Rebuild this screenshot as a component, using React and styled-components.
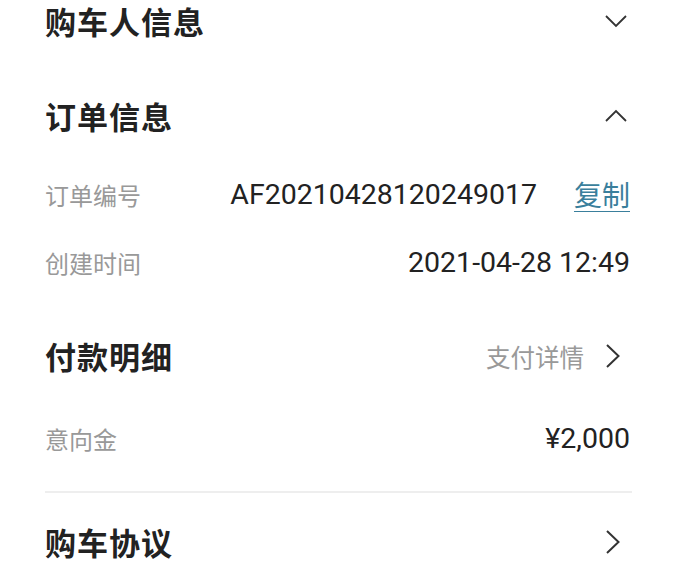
import React from "react";
import styled, { createGlobalStyle } from "styled-components";

const GlobalStyle = createGlobalStyle`
  html, body {
    margin: 0;
    padding: 0;
    background: #fff;
  }
  body {
    font-family: Roboto, "Noto Sans CJK SC", "Noto Sans", sans-serif;
    color: #222;
    overflow: hidden;
  }
`;

const Page = styled.div`
  width: 673px;
  height: 587px;
  overflow: hidden;
  background: #fff;
  padding: 0 43px 0 45px;
  box-sizing: border-box;
`;

const Section = styled.section`
  margin-top: ${(p) => p.$top ?? 24}px;
`;

const Header = styled.div`
  height: ${(p) => p.$h ?? 72}px;
  display: flex;
  align-items: center;
  justify-content: space-between;
`;

const Title = styled.h2`
  margin: 0;
  font-family: "Noto Sans CJK SC", sans-serif;
  font-size: 31px;
  line-height: 40px;
  font-weight: 700;
  color: #222;
  letter-spacing: 1px;
`;

const HeaderAction = styled.div`
  display: flex;
  align-items: center;
  gap: 22px;
  padding-right: ${(p) => p.$pr ?? 3}px;
  font-family: "Noto Sans CJK SC", sans-serif;
  font-size: 24.5px;
  color: #999;
`;

const List = styled.div`
  padding-top: ${(p) => p.$pad || 8}px;
`;

const Row = styled.div`
  height: 68px;
  display: flex;
  align-items: center;
  justify-content: space-between;
`;

const Label = styled.span`
  font-family: "Noto Sans CJK SC", sans-serif;
  font-size: 24px;
  color: #999;
`;

const Value = styled.span`
  display: flex;
  align-items: center;
  gap: 37px;
  font-family: Roboto, sans-serif;
  font-size: 28.5px;
  color: #222;
`;

const Copy = styled.a`
  font-family: "Noto Sans CJK SC", sans-serif;
  font-size: 28px;
  color: #3a7f9c;
  text-decoration: underline;
  text-underline-offset: 5px;
  text-decoration-thickness: 1px;
`;

const Divider = styled.hr`
  border: none;
  border-top: 2px solid #eeeeee;
  margin: 19px -2px 13px 0;
`;

const Chevron = ({ dir }) => {
  if (dir === "right") {
    return (
      <svg width="14" height="24" viewBox="0 0 14 24">
        <path d="M1 1 L12.5 12 L1 23" fill="none" stroke="#333" strokeWidth="2" />
      </svg>
    );
  }
  const d = dir === "up" ? "M1 12 L11 2 L21 12" : "M1 2 L11 12 L21 2";
  return (
    <svg width="22" height="14" viewBox="0 0 22 14">
      <path d={d} fill="none" stroke="#333" strokeWidth="1.8" />
    </svg>
  );
};

const App = () => {
  return (
    <>
      <GlobalStyle />
      <Page>
        <Section $top={0}>
          <Header $h={42}>
            <Title>购车人信息</Title>
            <HeaderAction>
              <Chevron dir="down" />
            </HeaderAction>
          </Header>
        </Section>

        <Section $top={38}>
          <Header>
            <Title>订单信息</Title>
            <HeaderAction>
              <Chevron dir="up" />
            </HeaderAction>
          </Header>
          <List $pad={8}>
            <Row>
              <Label>订单编号</Label>
              <Value>
                AF20210428120249017
                <Copy>复制</Copy>
              </Value>
            </Row>
            <Row>
              <Label>创建时间</Label>
              <Value>2021-04-28 12:49</Value>
            </Row>
          </List>
        </Section>

        <Section>
          <Header>
            <Title>付款明细</Title>
            <HeaderAction $pr={10}>
              支付详情
              <Chevron dir="right" />
            </HeaderAction>
          </Header>
          <List $pad={12}>
            <Row>
              <Label>意向金</Label>
              <Value>¥2,000</Value>
            </Row>
          </List>
          <Divider />
        </Section>

        <Section $top={0}>
          <Header>
            <Title>购车协议</Title>
            <HeaderAction $pr={10}>
              <Chevron dir="right" />
            </HeaderAction>
          </Header>
        </Section>
      </Page>
    </>
  );
};

export default App;
